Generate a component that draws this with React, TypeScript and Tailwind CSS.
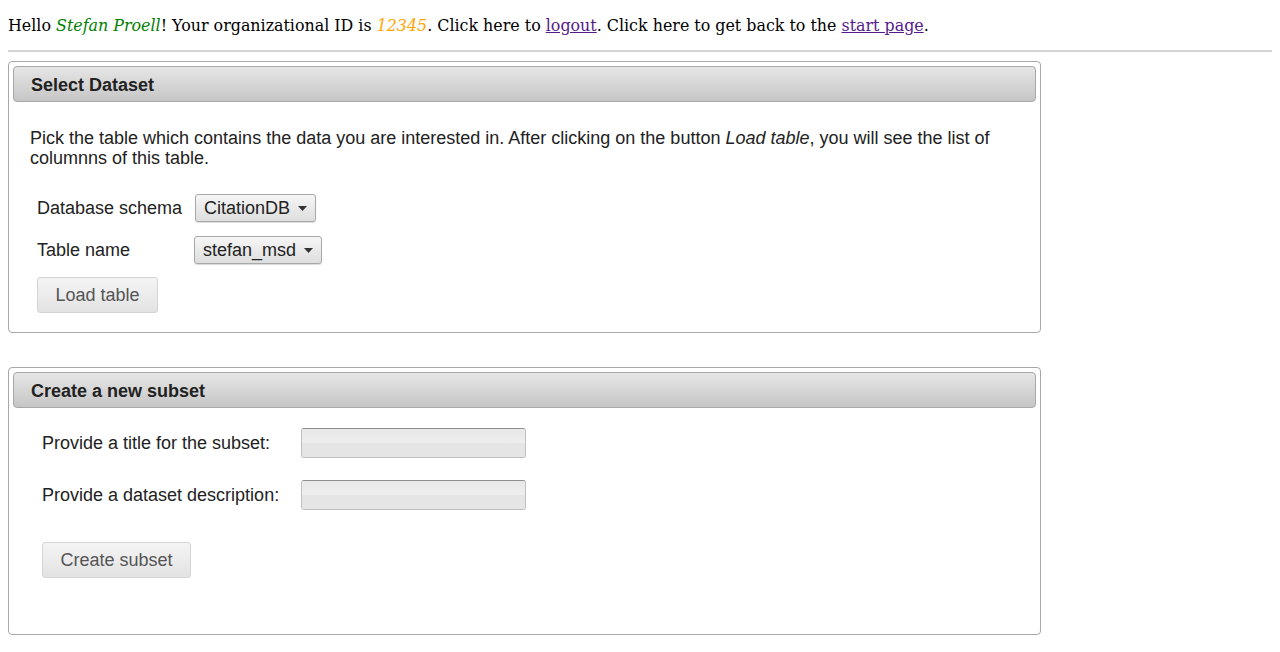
import React from "react";

const sans = { fontFamily: '"Liberation Sans", Arial, sans-serif' };

function Caret() {
  return (
    <svg width="9" height="5" viewBox="0 0 9 5" className="ml-[8px]">
      <path d="M0 0 H9 L4.5 5 Z" fill="#333" />
    </svg>
  );
}

function Dropdown({ label }: { label: string }) {
  return (
    <div className="inline-flex h-[28px] items-center rounded-[3px] border border-[#a8a8a8] bg-gradient-to-b from-[#f6f6f6] to-[#dedede] pl-[8px] pr-[8px] text-[18px] leading-none text-[#222] shadow-[0_1px_1px_rgba(0,0,0,0.15)]">
      <span>{label}</span>
      <Caret />
    </div>
  );
}

function Button({ label, w }: { label: string; w: string }) {
  return (
    <div
      className={`flex h-[36px] items-center justify-center rounded-[3px] border border-[#d4d4d4] bg-gradient-to-b from-[#f4f4f4] via-[#ececec] to-[#e2e2e2] text-[18px] text-[#555] ${w}`}
    >
      {label}
    </div>
  );
}

function TextInput() {
  return (
    <div className="h-[30px] w-[225px] overflow-hidden rounded-[3px] border border-[#c0c0c0] border-t-[#909090] shadow-[inset_0_2px_2px_rgba(0,0,0,0.15)]">
      <div className="h-1/2 bg-gradient-to-b from-[#e8e8e8] to-[#eeeeee]" />
      <div className="h-1/2 bg-[#e5e5e5]" />
    </div>
  );
}

function PanelHeader({ title }: { title: string }) {
  return (
    <div className="mx-[4px] mt-[4px] flex h-[36px] items-center rounded-[4px] border border-[#a8a8a8] bg-gradient-to-b from-[#e6e6e6] to-[#c6c6c6] pl-[17px] pt-[2px] text-[18px] font-bold text-[#222]">
      {title}
    </div>
  );
}

export default function App() {
  return (
    <div className="min-h-[652px] bg-white px-[8px] text-black">
      <div
        className="pt-[16px] text-[15.88px] leading-[20px]"
        style={{ fontFamily: '"DejaVu Serif", serif' }}
      >
        Hello <i className="text-[#008000]">Stefan Proell</i>! Your organizational ID is{" "}
        <i className="text-[#ffa500]">12345</i>. Click here to{" "}
        <a className="text-[#551a8b] underline">logout</a>. Click here to get back to the{" "}
        <a className="text-[#551a8b] underline">start page</a>.
      </div>
      <div className="mt-[14px] h-[2px] bg-[#d3d3d3]" />

      <div style={sans} className="w-[1033px]">
        <div className="mt-[9px] h-[272px] rounded-[4px] border border-[#a8a8a8]">
          <PanelHeader title="Select Dataset" />
          <div className="pl-[21px] pr-[20px] pt-[26px] text-[#222]">
            <p className="text-[18px] leading-[20px]">
              Pick the table which contains the data you are interested in. After clicking on the button{" "}
              <i>Load table</i>, you will see the list of columnns of this table.
            </p>
            <div className="mt-[26px] flex flex-col pl-[7px] text-[18px]">
              <div className="flex items-center">
                <span className="w-[158px]">Database schema</span>
                <Dropdown label="CitationDB" />
              </div>
              <div className="mt-[14px] flex items-center">
                <span className="w-[157px]">Table name</span>
                <Dropdown label="stefan_msd" />
              </div>
              <div className="mt-[13px]">
                <Button label="Load table" w="w-[121px]" />
              </div>
            </div>
          </div>
        </div>

        <div className="mt-[34px] h-[268px] rounded-[4px] border border-[#a8a8a8]">
          <PanelHeader title="Create a new subset" />
          <div className="pl-[33px] pt-[20px] text-[18px] text-[#222]">
            <div className="flex items-center">
              <span className="w-[259px]">Provide a title for the subset:</span>
              <TextInput />
            </div>
            <div className="mt-[22px] flex items-center">
              <span className="w-[259px]">Provide a dataset description:</span>
              <TextInput />
            </div>
            <div className="mt-[32px]">
              <Button label="Create subset" w="w-[149px]" />
            </div>
          </div>
        </div>
      </div>
    </div>
  );
}
